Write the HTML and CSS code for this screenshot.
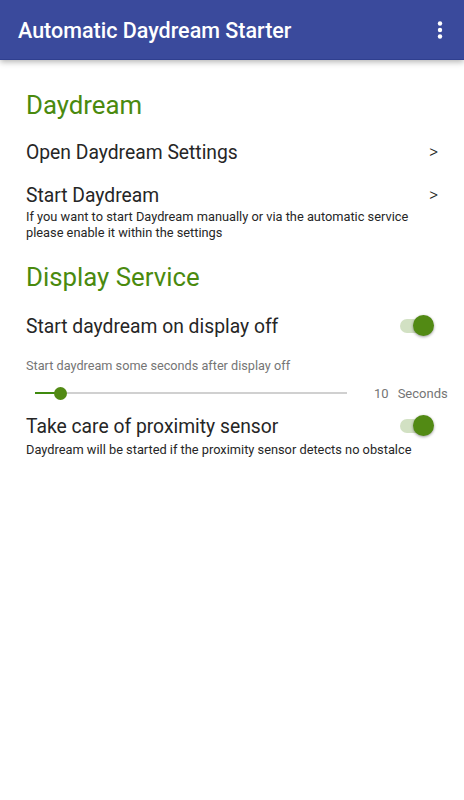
FILE: index.html
```html
<!DOCTYPE html>
<html lang="en">
<head>
  <meta charset="UTF-8">
  <meta name="viewport" content="width=device-width, initial-scale=1.0">
  <link rel="stylesheet" href="styles.css">
  <title>Automatic Daydream Starter</title>
</head>
<body>
  <div class="toolbar">
    <span class="toolbar-title">Automatic Daydream Starter</span>
    <svg class="menu-icon" width="6" height="18" viewBox="0 0 6 18">
      <circle cx="3" cy="2.5" r="2.2" fill="#fff"/>
      <circle cx="3" cy="9" r="2.2" fill="#fff"/>
      <circle cx="3" cy="15.5" r="2.2" fill="#fff"/>
    </svg>
  </div>

  <div class="content">
    <h2 class="category">Daydream</h2>

    <div class="pref pref-open">
      <div class="pref-row">
        <span class="pref-title">Open Daydream Settings</span>
        <span class="arrow">&gt;</span>
      </div>
    </div>

    <div class="pref pref-start">
      <div class="pref-row">
        <span class="pref-title">Start Daydream</span>
        <span class="arrow">&gt;</span>
      </div>
      <p class="pref-summary">If you want to start Daydream manually or via the automatic service please enable it within the settings</p>
    </div>

    <h2 class="category category-display">Display Service</h2>

    <div class="pref pref-display">
      <div class="pref-row">
        <span class="pref-title">Start daydream on display off</span>
        <span class="switch"><span class="switch-thumb"></span></span>
      </div>
    </div>

    <div class="seek">
      <p class="seek-label">Start daydream some seconds after display off</p>
      <div class="seek-row">
        <div class="seek-track">
          <div class="seek-fill"></div>
          <div class="seek-thumb"></div>
        </div>
        <span class="seek-value">10</span>
        <span class="seek-unit">Seconds</span>
      </div>
    </div>

    <div class="pref pref-prox">
      <div class="pref-row">
        <span class="pref-title">Take care of proximity sensor</span>
        <span class="switch"><span class="switch-thumb"></span></span>
      </div>
      <p class="pref-summary pref-summary-prox">Daydream will be started if the proximity sensor detects no obstalce</p>
    </div>
  </div>
</body>
</html>
```

FILE: styles.css
```css
body {
  margin: 0;
  font-family: Roboto, sans-serif;
  background-color: #ffffff;
  color: #212121;
}

.toolbar {
  height: 60px;
  box-sizing: border-box;
  background-color: #3a4a9c;
  border-bottom: 1px solid #2f3f8f;
  display: flex;
  align-items: center;
  justify-content: space-between;
  padding: 0 21px 0 18px;
  box-shadow: 0 2px 6px rgba(0, 0, 0, 0.3);
  position: relative;
}

.toolbar-title {
  color: #fff;
  font-size: 21.5px;
  font-weight: 500;
  margin-top: 1px;
}

.menu-icon {
  display: block;
  margin-top: 0;
}

.content {
  padding: 0 24px 0 26px;
}

.category {
  margin: 0;
  color: #4a8a0e;
  font-size: 25.8px;
  font-weight: 400;
  line-height: 32px;
  padding-top: 29px;
}

.category-display {
  padding-top: 20px;
}

.pref-row {
  display: flex;
  align-items: center;
  justify-content: space-between;
  height: 26px;
}

.pref-title {
  font-size: 19.3px;
  color: #262626;
}

.arrow {
  font-size: 17.5px;
  font-weight: 300;
  color: #262626;
  margin-right: 2px;
}

.pref-open {
  padding-top: 18px;
}

.pref-start {
  padding-top: 17px;
}

.pref-display {
  padding-top: 20px;
}

.pref-summary {
  margin: 0;
  font-size: 12.8px;
  line-height: 16px;
  color: #262626;
  padding-top: 1px;
}

.pref-summary-prox {
  margin-top: 2px;
}

.switch {
  position: relative;
  flex-shrink: 0;
  width: 33px;
  height: 14px;
  border-radius: 7px;
  background-color: #d2e1c3;
  margin-right: 7px;
}

.switch-thumb {
  position: absolute;
  right: -1px;
  top: -4px;
  width: 21px;
  height: 21px;
  border-radius: 50%;
  background-color: #528a14;
  box-shadow: 0 1px 3px rgba(0, 0, 0, 0.4);
}

.seek {
  padding-top: 19px;
}

.seek-label {
  margin: 0;
  font-size: 12.7px;
  line-height: 16px;
  color: #757575;
}

.seek-row {
  display: flex;
  align-items: center;
  height: 22px;
  margin-top: 8px;
}

.seek-track {
  position: relative;
  flex-shrink: 0;
  margin-left: 9px;
  width: 312px;
  height: 2px;
  background-color: #d0d0d0;
}

.seek-fill {
  width: 22px;
  height: 100%;
  background-color: #3f8a0e;
}

.seek-thumb {
  position: absolute;
  left: 19px;
  top: -5.5px;
  width: 13px;
  height: 13px;
  border-radius: 50%;
  background-color: #528a14;
}

.seek-value {
  margin-left: 27px;
  font-size: 13px;
  color: #757575;
}

.seek-unit {
  flex-shrink: 0;
  margin-left: 9px;
  font-size: 13px;
  color: #757575;
}

.pref-prox {
  padding-top: 9px;
}
```
